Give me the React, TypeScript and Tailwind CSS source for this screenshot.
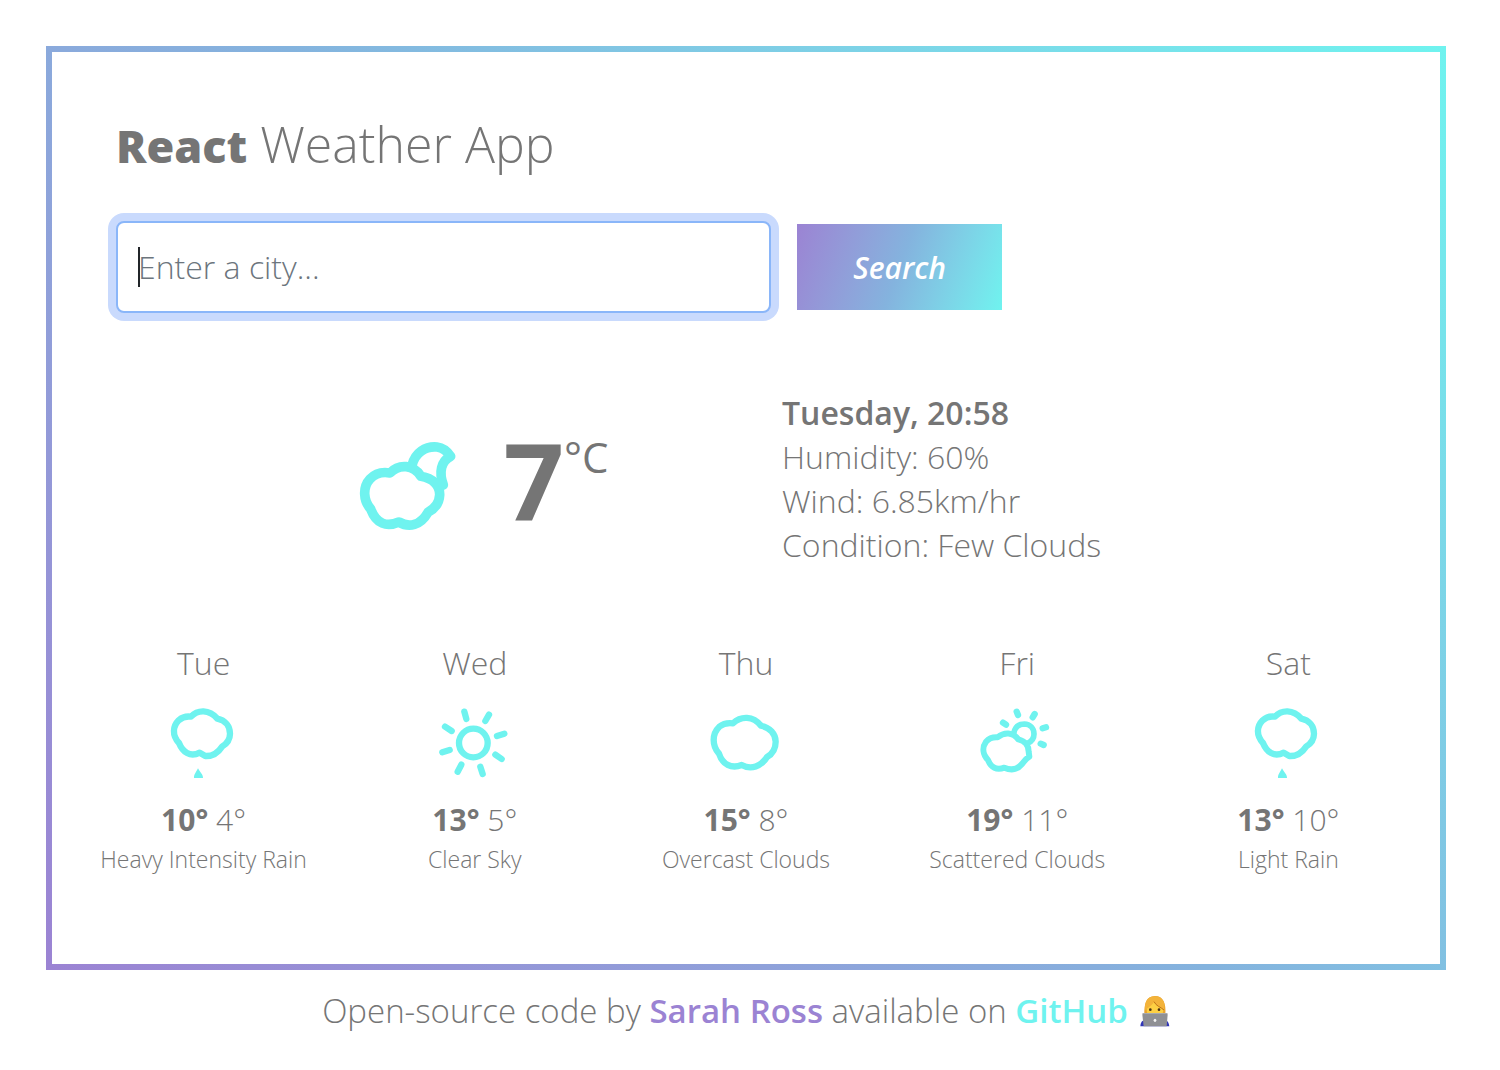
import type { ReactNode } from 'react';

const CYAN = '#6ff3ef';

function Icon({ viewBox, children }: { viewBox: string; children: ReactNode }) {
  return (
    <svg
      viewBox={viewBox}
      className="h-[100px] w-[110px]"
      fill="none"
      stroke={CYAN}
      strokeWidth="19"
      strokeLinecap="round"
      strokeLinejoin="round"
      aria-hidden="true"
    >
      {children}
    </svg>
  );
}

function RainIcon() {
  return (
    <Icon viewBox="10 0 330 300">
      <path d="M136 77C156 56 190 54 215 83C239 88 253 106 253 128C253 147 242 159 229 167C216 187 201 196 179 195L162 185C133 200 111 183 100 156C78 132 82 105 99 88C109 79 122 75 136 77Z" />
      <path d="M157 232C152 243 144 251 145 261H172C173 251 162 243 157 232Z" fill={CYAN} stroke="none" />
    </Icon>
  );
}

function SunIcon() {
  return (
    <Icon viewBox="-1 0 330 300">
      <circle cx="159" cy="156" r="43" />
      <path d="M132 62L138 84M206 71L195 90M252 128L230 135M244 204L225 191M187 249L180 227M112 242L123 221M66 184L88 177M74 107L94 120" />
    </Icon>
  );
}

function CloudIcon() {
  return (
    <Icon viewBox="3 0 330 300">
      <path d="M129 97C153 74 189 74 213 104C239 109 257 129 257 152C257 174 247 189 231 198C213 226 184 238 155 222C124 234 97 220 87 188C66 164 65 129 88 107C99 98 112 95 129 97Z" />
    </Icon>
  );
}

function SunCloudIcon() {
  return (
    <Icon viewBox="7 0 330 300">
      <path strokeWidth="18" d="M114 139C134 122 159 123 176 145C198 150 207 166 207 182L209 197C199 203 194 210 187 219C173 236 154 239 134 230C111 239 94 230 85 207C69 190 67 169 79 152C89 141 101 138 114 139Z" />
      <path strokeWidth="17" d="M162 127C166 107 178 99 194 99C211 100 223 112 223 129C223 143 216 151 205 156" />
      <path d="M171 62L175 72M225 69L219 79M259 109L249 112M252 162L243 158M139 101L130 95" />
    </Icon>
  );
}

function MoonCloudIcon() {
  return (
    <svg
      viewBox="0 0 420 390"
      className="mt-3.5 h-[130px] w-[140px]"
      fill="none"
      stroke={CYAN}
      strokeWidth="29"
      strokeLinejoin="round"
      strokeLinecap="round"
      aria-hidden="true"
    >
      <path d="M153 156C181 127 224 131 246 166C281 172 303 193 302 222C301 246 289 262 267 274C244 314 210 321 180 303C143 319 112 309 95 264C73 239 70 199 93 174C109 157 131 152 153 156Z" />
      <path d="M219 133C228 94 260 75 294 78C310 80 323 88 335 106C306 120 299 154 313 192" />
    </svg>
  );
}

function TechnologistIcon() {
  return (
    <svg viewBox="0 0 90 96" className="h-8 w-[30px]" role="img" aria-label="Woman technologist">
      <path d="M13 60C12 25 19 4 44 3C69 2 79 24 76 60Z" fill="#e9a32c" />
      <path d="M20 45C19 25 28 17 45 17C62 17 71 27 70 46C69 60 60 67 45 67C30 67 21 60 20 45Z" fill="#fdd043" />
      <path d="M16 47C22 37 34 35 42 21C51 34 63 38 72 46C79 20 63 2 43 4C20 5 12 25 16 47Z" fill="#f3b33a" />
      <path d="M42 20C49 34 62 36 72 45" fill="none" stroke="#bf7418" strokeWidth="3" />
      <circle cx="31" cy="44" r="4" fill="#4b3214" />
      <circle cx="57" cy="44" r="4" fill="#4b3214" />
      <path d="M1 94C2 80 7 76 16 74H74C83 76 87 83 88 94Z" fill="#3136b8" />
      <path d="M12 54H78Q83 54 83 59L80 94H11L7 59Q7 54 12 54Z" fill="#8f9094" />
      <path d="M12 54H78Q83 54 83 57H7Q7 54 12 54Z" fill="#a9aaae" />
      <ellipse cx="45" cy="76" rx="4" ry="5" fill="#f3f3f3" />
    </svg>
  );
}

const forecast = [
  { day: 'Tue', icon: <RainIcon />, high: 10, low: 4, text: 'Heavy Intensity Rain' },
  { day: 'Wed', icon: <SunIcon />, high: 13, low: 5, text: 'Clear Sky' },
  { day: 'Thu', icon: <CloudIcon />, high: 15, low: 8, text: 'Overcast Clouds' },
  { day: 'Fri', icon: <SunCloudIcon />, high: 19, low: 11, text: 'Scattered Clouds' },
  { day: 'Sat', icon: <RainIcon />, high: 13, low: 10, text: 'Light Rain' },
];

export default function App() {
  return (
    <div className="bg-white pt-[46px] pr-[54px] pb-8 pl-[46px] font-['Open_Sans',sans-serif] text-[32px] font-light text-[#757575]">
      <main className="bg-linear-45 from-[#9b83d3] via-[#84b3de] to-[#6ff3ef] p-1.5">
        <div className="bg-white px-4 pt-[62px] pb-[89px]">
          <header className="px-12">
            <h1 className="text-[50px] leading-[60px]">
              <strong className="text-[45px] font-extrabold">React</strong> Weather App
            </h1>
            <form className="mt-[45px] flex items-center gap-[26px]" onSubmit={(e) => e.preventDefault()}>
              <div className="relative w-[52%]">
                <input
                  type="search"
                  aria-label="City"
                  placeholder="Enter a city..."
                  className="block h-[92px] w-full rounded-lg border-2 border-[#8ab6f9] bg-white px-5 pb-0.5 text-[32px] font-light caret-transparent ring-8 ring-[#c9dafd] outline-none placeholder:text-[#6c757d]"
                />
                <span className="pointer-events-none absolute top-[26px] left-[22px] h-10 w-0.5 bg-[#212529]" />
              </div>
              <button
                type="submit"
                className="h-[86px] bg-linear-110 from-[#9b83d3] via-[#84b3de] to-[#6ff3ef] px-14 text-[30px] font-semibold text-white italic"
              >
                Search
              </button>
            </form>
          </header>

          <section className="mt-[78px] grid grid-cols-2 items-center">
            <div className="flex items-center justify-center gap-6 pl-[134px]">
              <MoonCloudIcon />
              <div className="flex items-start">
                <span className="text-[106px] leading-[130px] font-bold">7</span>
                <span className="pt-2.5 text-[42px] leading-[66px] font-medium">°C</span>
              </div>
            </div>
            <ul className="pl-9 leading-[44px]">
              <li className="font-semibold">Tuesday, 20:58</li>
              <li>Humidity: 60%</li>
              <li>Wind: 6.85km/hr</li>
              <li>Condition: Few Clouds</li>
            </ul>
          </section>

          <section className="mt-[72px] grid grid-cols-5">
            {forecast.map((f) => (
              <article key={f.day} className="flex flex-col items-center">
                <h2 className="leading-[48px]">{f.day}</h2>
                <div className="mt-1">{f.icon}</div>
                <p className="mt-[7px] text-[30px] leading-[44px]">
                  <strong className="font-bold">{f.high}°</strong> {f.low}°
                </p>
                <p className="mt-px text-[23px] leading-8 whitespace-nowrap">{f.text}</p>
              </article>
            ))}
          </section>
        </div>
      </main>

      <footer className="mt-[17px] flex items-center justify-center gap-3 text-[33px] leading-[48px]">
        <p>
          Open-source code by{' '}
          <a href="#sarah" className="font-semibold text-[#9b83d3]">Sarah Ross</a> available on{' '}
          <a href="#github" className="font-semibold text-[#6ff3ef]">GitHub</a>
        </p>
        <TechnologistIcon />
      </footer>
    </div>
  );
}
